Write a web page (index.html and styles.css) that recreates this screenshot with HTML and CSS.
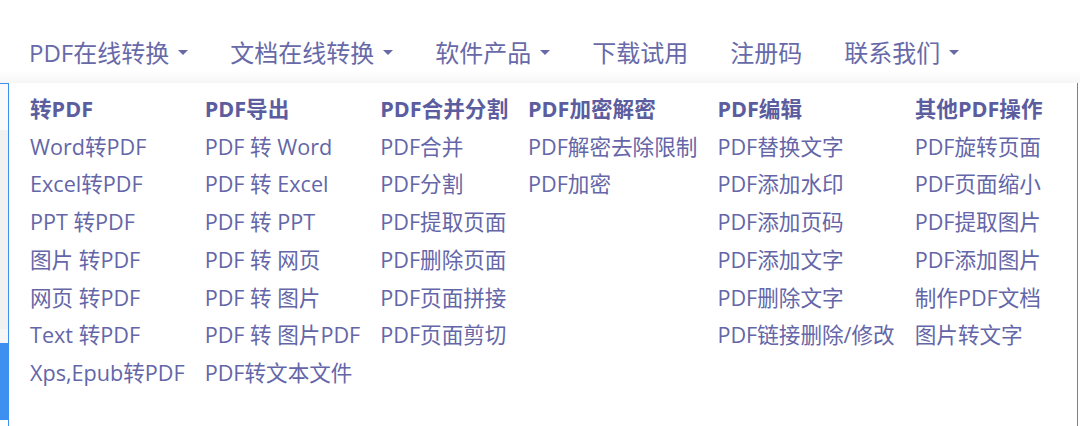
FILE: index.html
```html
<!DOCTYPE html>
<html lang="zh-CN">
<head>
<meta charset="utf-8">
<title>PDF在线转换</title>
<link rel="stylesheet" href="styles.css">
</head>
<body>
<nav class="nav">
  <a class="nav-item">PDF在线转换<span class="caret"></span></a>
  <a class="nav-item">文档在线转换<span class="caret"></span></a>
  <a class="nav-item">软件产品<span class="caret"></span></a>
  <a class="nav-item">下载试用</a>
  <a class="nav-item">注册码</a>
  <a class="nav-item">联系我们<span class="caret"></span></a>
</nav>
<div class="stage">
  <div class="side-left"></div>
  <div class="panel">
    <ul class="col">
      <li class="head">转PDF</li>
      <li>Word转PDF</li>
      <li>Excel转PDF</li>
      <li>PPT 转PDF</li>
      <li>图片 转PDF</li>
      <li>网页 转PDF</li>
      <li>Text 转PDF</li>
      <li>Xps,Epub转PDF</li>
    </ul>
    <ul class="col">
      <li class="head">PDF导出</li>
      <li>PDF 转 Word</li>
      <li>PDF 转 Excel</li>
      <li>PDF 转 PPT</li>
      <li>PDF 转 网页</li>
      <li>PDF 转 图片</li>
      <li>PDF 转 图片PDF</li>
      <li>PDF转文本文件</li>
    </ul>
    <ul class="col">
      <li class="head">PDF合并分割</li>
      <li>PDF合并</li>
      <li>PDF分割</li>
      <li>PDF提取页面</li>
      <li>PDF删除页面</li>
      <li>PDF页面拼接</li>
      <li>PDF页面剪切</li>
    </ul>
    <ul class="col">
      <li class="head">PDF加密解密</li>
      <li>PDF解密去除限制</li>
      <li>PDF加密</li>
    </ul>
    <ul class="col">
      <li class="head">PDF编辑</li>
      <li>PDF替换文字</li>
      <li>PDF添加水印</li>
      <li>PDF添加页码</li>
      <li>PDF添加文字</li>
      <li>PDF删除文字</li>
      <li>PDF链接删除/修改</li>
    </ul>
    <ul class="col">
      <li class="head">其他PDF操作</li>
      <li>PDF旋转页面</li>
      <li>PDF页面缩小</li>
      <li>PDF提取图片</li>
      <li>PDF添加图片</li>
      <li>制作PDF文档</li>
      <li>图片转文字</li>
    </ul>
  </div>
  <div class="side-right"></div>
</div>
</body>
</html>
```
FILE: styles.css
```css
html, body {
  margin: 0;
  padding: 0;
  background: #ffffff;
}
body {
  font-family: "Open Sans", "Noto Sans CJK SC", sans-serif;
  color: #6466a8;
  width: 1080px;
  height: 426px;
  overflow: hidden;
}
.nav {
  display: flex;
  align-items: center;
  height: 83px;
  padding: 31px 8px 12px;
  box-sizing: border-box;
  background: linear-gradient(to bottom, #ffffff 0, #ffffff 71px, #f6f6f6 83px);
}
.nav-item {
  display: flex;
  align-items: center;
  padding: 0 21px;
  font-size: 24px;
  color: #6769a8;
  text-decoration: none;
  white-space: nowrap;
}
.caret {
  display: inline-block;
  width: 0;
  height: 0;
  margin-left: 9px;
  margin-top: 2px;
  border-left: 5px solid transparent;
  border-right: 5px solid transparent;
  border-top: 5px solid #6769a8;
}
.stage {
  display: flex;
  height: 343px;
}
.side-left {
  width: 8px;
  border-top: 1px solid #3d8ff0;
  border-right: 1px solid #3d8ff0;
  background: linear-gradient(to bottom,
    #fafafa 0, #fafafa 46px,
    #f1f1f1 46px, #f1f1f1 245px,
    #f6f6f6 245px, #f6f6f6 259px,
    #3d8ff0 259px, #3d8ff0 336px,
    #ffffff 336px);
}
.panel {
  flex: 1;
  display: flex;
  gap: 20px;
  padding: 7px 0 0 21px;
  background: #ffffff;
}
.side-right {
  width: 2px;
  border-left: 1px solid #3d8ff0;
  background: #ffffff;
}
.col {
  list-style: none;
  margin: 0;
  padding: 0;
  font-size: 21.6px;
  line-height: 37.7px;
  white-space: nowrap;
}
.head {
  font-weight: 700;
  color: #5b5d9f;
}
```
